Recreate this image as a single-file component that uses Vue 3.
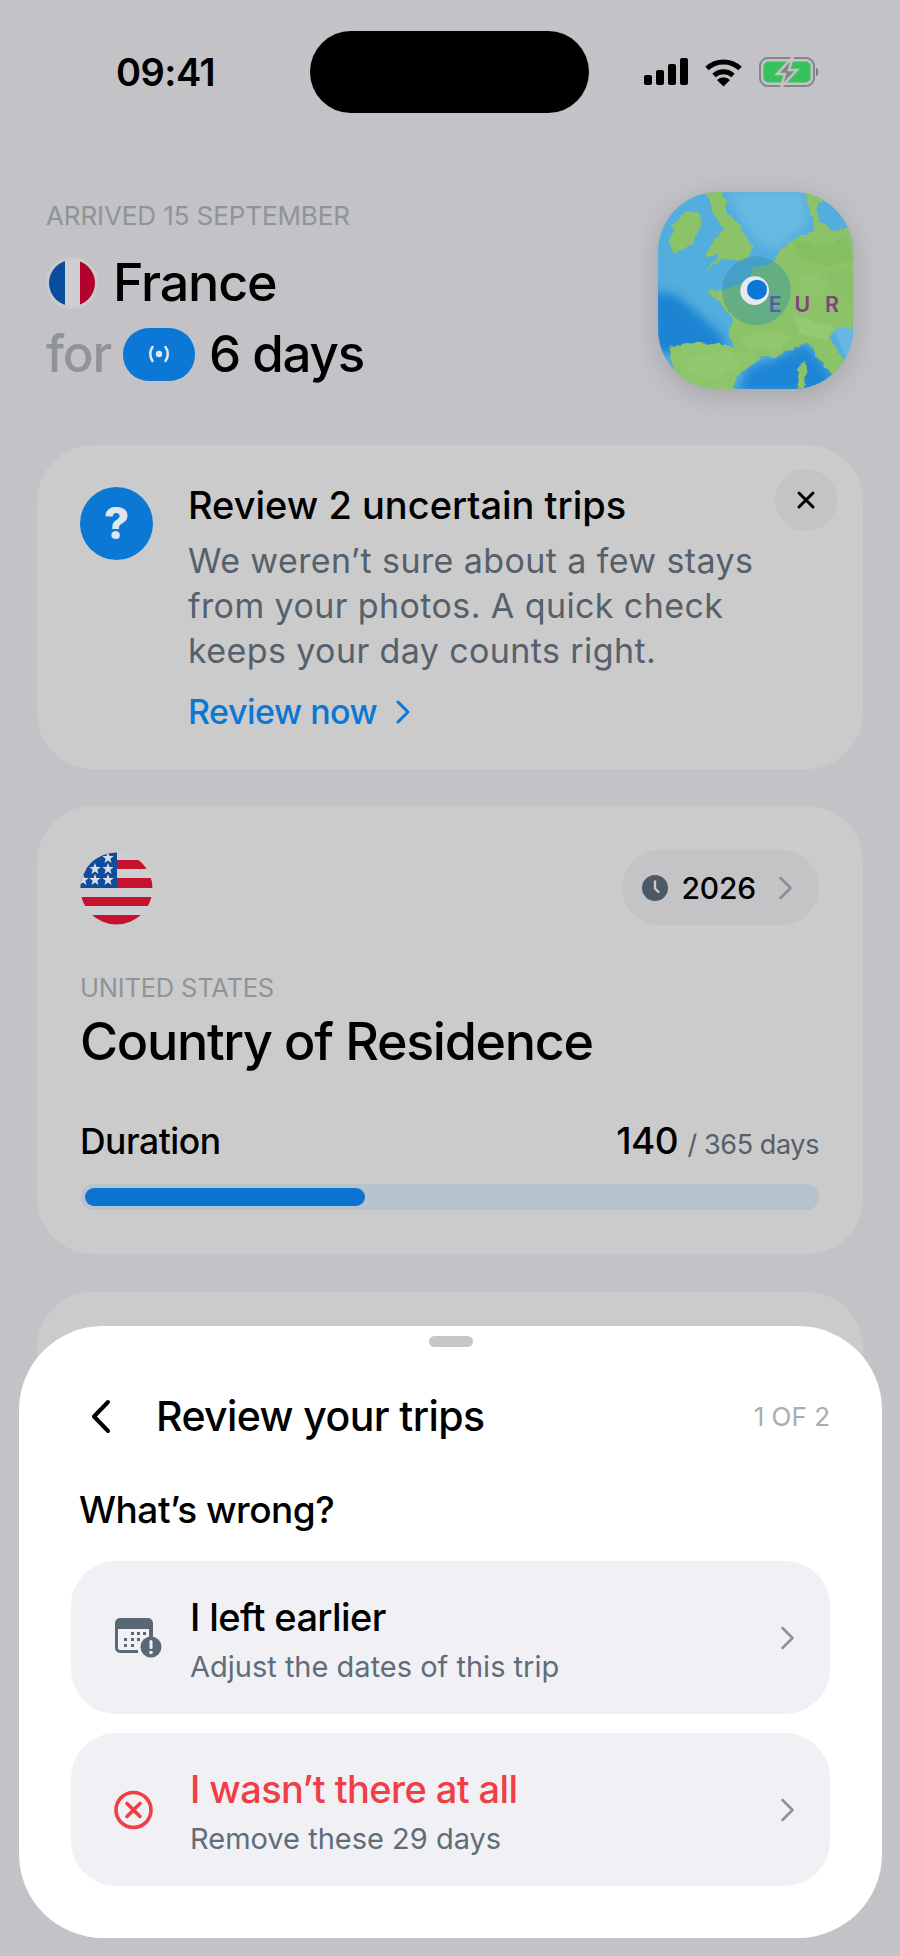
<script setup>
import { computed } from 'vue'

const daysUsed = 140
const daysTotal = 365
const fillWidth = computed(() => (daysUsed / daysTotal) * 100 + '%')

const stars = [
  [108, 858], [95, 869], [108, 869], [83, 880], [95, 880], [108, 880]
]

// a few darker and lighter blotches so the land isn't a flat green
const patches = [
  ['M520 240 L610 262 L680 232 L700 300 L620 322 L540 292 Z', '#84bf62'],
  ['M620 340 L700 330 V420 L640 400 Z', '#87c065'],
  ['M350 530 L470 510 L520 530 L480 572 L390 570 Z', '#92c76f'],
  ['M520 470 L640 500 L620 545 L540 520 Z', '#95c973'],
  ['M210 590 L330 575 L360 620 L280 660 L200 640 Z', '#93c770'],
  ['M530 350 L600 340 L620 400 L550 410 Z', '#90c56d']
]

function starPoints(cx, cy, r) {
  const pts = []
  for (let i = 0; i < 10; i++) {
    const rad = i % 2 ? r * 0.42 : r
    const a = -Math.PI / 2 + (i * Math.PI) / 5
    pts.push((cx + rad * Math.cos(a)).toFixed(1) + ',' + (cy + rad * Math.sin(a)).toFixed(1))
  }
  return pts.join(' ')
}
</script>

<template>
  <div class="screen">
    <div class="status">
      <span class="time">09:41</span>
      <div class="island"></div>
      <div class="status-icons">
        <svg width="44" height="28" viewBox="0 0 44 28" fill="#000">
          <rect x="0" y="17" width="8" height="10" rx="2" />
          <rect x="12" y="12" width="8" height="15" rx="2" />
          <rect x="24" y="6" width="8" height="21" rx="2" />
          <rect x="36" y="0" width="8" height="27" rx="2" />
        </svg>
        <svg width="37" height="29" viewBox="0 0 37 29" fill="none" stroke="#000" stroke-width="5">
          <path d="M2 10.5 A24 24 0 0 1 35 10.5" />
          <path d="M9 17.5 A14 14 0 0 1 28 17.5" />
          <path d="M18.5 28.5 L12 22 A9 9 0 0 1 25 22 Z" fill="#000" stroke="none" />
        </svg>
        <svg width="62" height="30" viewBox="0 0 62 30" fill="none">
          <rect x="1" y="1" width="54" height="28" rx="8" stroke="#838588" stroke-width="2" />
          <rect x="4.5" y="4.5" width="47" height="21" rx="5" fill="#38c25c" />
          <path d="M57 11 C60 12 60 18 57 19 Z" fill="#77797c" />
          <path d="M34 0 L18 17 H26 L22 30 L38 13 H30 Z" fill="#838588" stroke="#c2c2c7" stroke-width="2.5" />
        </svg>
      </div>
    </div>

    <header class="hero">
      <div class="hero-text">
        <div class="arrived">ARRIVED 15 SEPTEMBER</div>
        <div class="place">
          <svg class="fr-flag" width="52" height="52" viewBox="0 0 52 52">
            <clipPath id="frClip"><circle cx="26" cy="26" r="23" /></clipPath>
            <circle cx="26" cy="26" r="26" fill="#cbcbce" />
            <g clip-path="url(#frClip)">
              <rect x="0" y="0" width="19" height="52" fill="#0a4c9e" />
              <rect x="19" y="0" width="15" height="52" fill="#cfcfd1" />
              <rect x="34" y="0" width="18" height="52" fill="#b4002c" />
            </g>
          </svg>
          <span>France</span>
        </div>
        <div class="stay">
          <span class="for">for</span>
          <span class="live-pill">
            <svg width="30" height="24" viewBox="0 0 30 24" fill="none" stroke="#dce8f3" stroke-width="2.6" stroke-linecap="round">
              <path d="M8.5 5 C5.5 9 5.5 15 8.5 19" />
              <path d="M21.5 5 C24.5 9 24.5 15 21.5 19" />
              <circle cx="15" cy="12" r="3.2" fill="#dce8f3" stroke="none" />
            </svg>
          </span>
          <span>6 days</span>
        </div>
      </div>

      <div class="map">
        <svg width="195" height="197" viewBox="115 97 585 591">
          <defs>
            <filter id="soft" x="-20%" y="-20%" width="140%" height="140%">
              <feGaussianBlur stdDeviation="14" />
            </filter>
            <filter id="coast" x="-5%" y="-5%" width="110%" height="110%">
              <feTurbulence type="fractalNoise" baseFrequency="0.035" numOctaves="3" seed="4" />
              <feDisplacementMap in="SourceGraphic" scale="20" xChannelSelector="R" yChannelSelector="G" />
            </filter>
          </defs>
          <rect x="115" y="97" width="585" height="591" fill="#53addd" />
          <path d="M320 97 H560 V200 L470 270 L400 240 Z" fill="#68b9e2" filter="url(#soft)" />
          <path d="M100 395 L170 405 L245 470 L310 530 L320 580 L100 580 Z" fill="#1a84d3" filter="url(#soft)" />
          <path d="M350 700 L385 625 L470 595 L555 552 L610 610 L640 660 L610 700 Z" fill="#1c86d5" filter="url(#soft)" />
          <path d="M640 505 H700 V610 L680 600 Z" fill="#64b8e2" />

          <g filter="url(#coast)">
            <path d="M150 200 L205 155 L245 165 L248 195 L215 250 L190 270 L155 285 L150 240 L165 215 Z" fill="#8cc368" />
            <path d="M255 90 H310 L322 160 L362 205 L402 262 L372 300 L300 302 L255 335 L298 285 L258 287 L292 232 L312 212 L272 150 Z" fill="#8cc368" />
            <path d="M555 90 H625 L590 150 L600 190 L640 210 L720 200 V505 H650 L630 530 L670 600 L675 628 L640 650 L600 600 L565 550 L520 568 L470 592 L420 592 L345 565 L330 530 L340 480 L300 425 L262 395 L310 392 L380 370 L400 330 L465 300 L490 268 L540 228 L585 215 L575 170 Z" fill="#8cc368" />
            <path d="M640 100 H720 V190 L680 170 Z" fill="#8cc368" />
            <path d="M150 565 L210 548 L345 560 L422 594 L380 628 L350 655 L338 700 H240 L165 645 Z" fill="#8fc56b" />
            <path d="M535 625 L556 605 L560 640 L552 690 L532 690 Z" fill="#8cc368" />
            <path v-for="(p, i) in patches" :key="i" :d="p[0]" :fill="p[1]" />
          </g>

          <circle cx="410" cy="393" r="103" fill="#2f8fa8" fill-opacity="0.42" />
          <text x="467" y="458" class="eur">E</text>
          <text x="548" y="458" class="eur eur-r">U</text>
          <text x="637" y="458" class="eur eur-r">R</text>
          <text x="726" y="458" class="eur eur-r">O</text>
          <circle cx="405" cy="393" r="43" fill="#e6e9ee" />
          <circle cx="412" cy="390" r="30" fill="#0b78d8" />
        </svg>
      </div>
    </header>

    <section class="card notice">
      <div class="help-badge">?</div>
      <div class="notice-body">
        <h3>Review 2 uncertain trips</h3>
        <p>We weren’t sure about a few stays from your photos. A quick check keeps your day counts right.</p>
        <div class="review-link">
          Review now
          <svg width="14" height="24" viewBox="0 0 14 24" fill="none" stroke="#0a78d4" stroke-width="3" stroke-linecap="round" stroke-linejoin="round">
            <path d="M2 2 L12 12 L2 22" />
          </svg>
        </div>
      </div>
      <button class="close">
        <svg width="20" height="20" viewBox="0 0 20 20" stroke="#000" stroke-width="3" stroke-linecap="round">
          <path d="M3 3 L17 17 M17 3 L3 17" />
        </svg>
      </button>
    </section>

    <section class="card residence">
      <div class="res-top">
        <svg width="73" height="73" viewBox="80 852 73 73">
          <clipPath id="usClip"><circle cx="116.5" cy="888.5" r="36" /></clipPath>
          <g clip-path="url(#usClip)">
            <rect x="80" y="852" width="73" height="73" fill="#cfcfd1" />
            <rect x="80" y="860" width="73" height="9" fill="#c4122f" />
            <rect x="80" y="878" width="73" height="10" fill="#c4122f" />
            <rect x="80" y="897" width="73" height="9" fill="#c4122f" />
            <rect x="80" y="915" width="73" height="10" fill="#c4122f" />
            <rect x="80" y="852" width="37" height="36" fill="#0e4d9c" />
            <polygon v-for="(s, i) in stars" :key="i" :points="starPoints(s[0], s[1], 6)" fill="#dcdde0" />
          </g>
        </svg>
        <div class="year-pill">
          <svg width="26" height="26" viewBox="0 0 26 26">
            <circle cx="13" cy="13" r="13" fill="#4c5966" />
            <path d="M13 6.5 V13.5 L16.5 17" fill="none" stroke="#cbcbcc" stroke-width="2.4" stroke-linecap="round" />
          </svg>
          <span>2026</span>
          <svg width="15" height="24" viewBox="0 0 15 24" fill="none" stroke="#8b9096" stroke-width="2.6" stroke-linecap="round" stroke-linejoin="round">
            <path d="M2.5 2 L12.5 12 L2.5 22" />
          </svg>
        </div>
      </div>
      <div class="res-country">UNITED STATES</div>
      <h2>Country of Residence</h2>
      <div class="duration">
        <span>Duration</span>
        <span class="count">{{ daysUsed }} <small>/ {{ daysTotal }} days</small></span>
      </div>
      <div class="track">
        <div class="fill" :style="{ width: fillWidth }"></div>
      </div>
    </section>

    <section class="card third"></section>

    <div class="sheet">
      <div class="handle"></div>
      <div class="sheet-head">
        <svg width="22" height="35" viewBox="0 0 22 35" fill="none" stroke="#000" stroke-width="4" stroke-linecap="round" stroke-linejoin="round">
          <path d="M18 3 L4 17.5 L18 32" />
        </svg>
        <span class="sheet-title">Review your trips</span>
        <span class="step">1 OF 2</span>
      </div>
      <div class="wrong">What’s wrong?</div>

      <div class="row">
        <svg class="row-icon cal" width="50" height="46" viewBox="0 0 50 46">
          <path d="M6 1 H34 A5 5 0 0 1 39 6 V24 H35 V12 H4 V31 A2 2 0 0 0 6 33 H24 V36 H6 A5 5 0 0 1 1 31 V6 A5 5 0 0 1 6 1 Z" fill="#5a6876" />
          <g fill="#5a6876">
            <rect x="17" y="15" width="3" height="3" /><rect x="23" y="15" width="3" height="3" /><rect x="29" y="15" width="3" height="3" />
            <rect x="10" y="21" width="3" height="3" /><rect x="17" y="21" width="3" height="3" /><rect x="23" y="21" width="3" height="3" />
            <rect x="10" y="27" width="3" height="3" /><rect x="17" y="27" width="3" height="3" />
          </g>
          <circle cx="37" cy="30" r="10.5" fill="#5a6876" />
          <rect x="35.5" y="23" width="3" height="9" rx="1.5" fill="#f1f1f5" />
          <circle cx="37" cy="35.5" r="1.8" fill="#f1f1f5" />
        </svg>
        <div class="row-text">
          <div class="row-title">I left earlier</div>
          <div class="row-sub">Adjust the dates of this trip</div>
        </div>
        <svg width="15" height="24" viewBox="0 0 15 24" fill="none" stroke="#8b939b" stroke-width="2.6" stroke-linecap="round" stroke-linejoin="round">
          <path d="M2.5 2 L12.5 12 L2.5 22" />
        </svg>
      </div>

      <div class="row">
        <svg class="row-icon" width="50" height="40" viewBox="0 0 50 40" fill="none" stroke="#f03e46" stroke-width="3.6" stroke-linecap="round">
          <circle cx="19.5" cy="20" r="17.5" />
          <path d="M13 13.5 L26 26.5 M26 13.5 L13 26.5" />
        </svg>
        <div class="row-text">
          <div class="row-title danger">I wasn’t there at all</div>
          <div class="row-sub">Remove these 29 days</div>
        </div>
        <svg width="15" height="24" viewBox="0 0 15 24" fill="none" stroke="#8b939b" stroke-width="2.6" stroke-linecap="round" stroke-linejoin="round">
          <path d="M2.5 2 L12.5 12 L2.5 22" />
        </svg>
      </div>
    </div>
  </div>
</template>

<style>
html, body {
  margin: 0;
  background: #c2c2c7;
}
</style>

<style scoped>
.screen {
  position: relative;
  width: 900px;
  height: 1956px;
  overflow: hidden;
  background: #c2c2c7;
  font-family: Inter, "Noto Sans", sans-serif;
  color: #000;
}

/* status bar */
.status {
  display: flex;
  align-items: center;
  height: 82px;
  padding: 31px 79px 0 116px;
}
.time {
  width: 194px;
  font-size: 38px;
  font-weight: 600;
  letter-spacing: -0.5px;
}
.island {
  width: 280px;
  height: 82px;
  border-radius: 41px;
  background: #000;
}
.status-icons {
  display: flex;
  align-items: center;
  gap: 17px;
  margin-left: 55px;
}

/* header */
.hero {
  display: flex;
  justify-content: space-between;
  padding: 79px 47px 0 46px;
}
.hero-text {
  padding-top: 9px;
}
.arrived {
  font-size: 26px;
  line-height: 30px;
  color: #8f9498;
  letter-spacing: -0.1px;
}
.place {
  display: flex;
  align-items: center;
  gap: 15px;
  margin-top: 23px;
  font-size: 52px;
  line-height: 58px;
  font-weight: 500;
  letter-spacing: -1.2px;
}
.stay {
  display: flex;
  align-items: center;
  gap: 14px;
  margin-top: 13px;
  font-size: 51px;
  line-height: 58px;
  font-weight: 500;
  letter-spacing: -1.2px;
}
.for {
  margin-right: -2px;
  color: #8f9498;
}
.live-pill {
  display: flex;
  align-items: center;
  justify-content: center;
  width: 72px;
  height: 53px;
  border-radius: 26px;
  background: #0b78d6;
}
.map {
  width: 195px;
  height: 197px;
  border-radius: 60px;
  overflow: hidden;
  box-shadow: 0 6px 28px rgba(0, 0, 0, 0.16);
}
.map svg {
  display: block;
}
.eur {
  font-size: 64px;
  font-weight: 600;
  fill: #52609f;
  text-anchor: middle;
}
.eur-r {
  fill: #84407f;
}

/* cards */
.card {
  margin: 0 37px;
  background: #cbcbcc;
  border-radius: 56px;
  box-sizing: border-box;
}
.notice {
  position: relative;
  display: flex;
  height: 324px;
  margin-top: 56px;
  padding: 42px 43px;
}
.help-badge {
  flex: none;
  width: 73px;
  height: 73px;
  border-radius: 50%;
  background: #0b78d6;
  color: #dfe6ec;
  font-size: 44px;
  font-weight: 800;
  line-height: 73px;
  text-align: center;
}
.notice-body {
  margin-left: 35px;
}
.notice-body h3 {
  margin: -4px 0 0;
  font-size: 38px;
  line-height: 44px;
  font-weight: 500;
  letter-spacing: 0;
}
.notice-body p {
  width: 600px;
  margin: 11px 0 0;
  font-size: 34px;
  line-height: 45px;
  color: #56606b;
  letter-spacing: 0.4px;
}
.review-link {
  display: flex;
  align-items: center;
  gap: 19px;
  margin-top: 17px;
  font-size: 34px;
  line-height: 44px;
  font-weight: 500;
  color: #0a78d4;
  letter-spacing: -0.5px;
}
.close {
  position: absolute;
  top: 24px;
  right: 26px;
  display: flex;
  align-items: center;
  justify-content: center;
  width: 62px;
  height: 62px;
  padding: 0;
  border: 0;
  border-radius: 50%;
  background: #c4c4c6;
}

.residence {
  height: 448px;
  margin-top: 37px;
  padding: 44px 44px 0 43px;
}
.res-top {
  display: flex;
  justify-content: space-between;
  align-items: flex-start;
  margin-top: 2px;
}
.year-pill {
  display: flex;
  align-items: center;
  height: 75px;
  margin-top: -2px;
  padding: 0 26px 0 20px;
  border-radius: 38px;
  background: #c4c4c6;
  font-size: 30px;
  font-weight: 500;
  letter-spacing: -0.2px;
}
.year-pill span {
  margin: 0 22px 0 14px;
}
.res-country {
  margin-top: 48px;
  font-size: 25.5px;
  line-height: 30px;
  color: #8f9498;
  letter-spacing: -0.2px;
}
.residence h2 {
  margin: 8px 0 0;
  font-size: 52px;
  line-height: 62px;
  font-weight: 500;
  letter-spacing: -1.3px;
}
.duration {
  display: flex;
  justify-content: space-between;
  align-items: baseline;
  margin-top: 46px;
  font-size: 35.5px;
  line-height: 44px;
  font-weight: 500;
  letter-spacing: -0.5px;
}
.count {
  font-size: 37px;
}
.count small {
  font-size: 27px;
  font-weight: 400;
  color: #56606b;
  letter-spacing: -0.4px;
}
.track {
  height: 26px;
  margin: 17px 0 0 1px;
  padding: 4px;
  box-sizing: border-box;
  border-radius: 13px;
  background: #b6c2cc;
}
.fill {
  height: 18px;
  border-radius: 9px;
  background: #0a74d0;
}

.third {
  height: 300px;
  margin-top: 38px;
}

/* bottom sheet */
.sheet {
  position: absolute;
  left: 19px;
  top: 1326px;
  box-sizing: border-box;
  width: 863px;
  height: 612px;
  padding: 10px 52px 0;
  border-radius: 84px;
  background: #fff;
}
.handle {
  width: 44px;
  height: 11px;
  margin: 0 auto;
  border-radius: 6px;
  background: #c6c6c8;
}
.sheet-head {
  display: flex;
  align-items: center;
  margin-top: 46px;
  height: 46px;
  padding-left: 19px;
}
.sheet-title {
  margin-left: 44px;
  font-size: 41px;
  font-weight: 500;
  letter-spacing: -0.6px;
}
.step {
  margin-left: auto;
  font-size: 26px;
  color: #a9acb0;
}
.wrong {
  margin: 47px 0 0 8px;
  font-size: 37px;
  line-height: 48px;
  font-weight: 500;
  letter-spacing: -0.5px;
}
.row {
  display: flex;
  align-items: center;
  box-sizing: border-box;
  height: 153px;
  margin-bottom: 19px;
  padding: 0 35px 0 43px;
  border-radius: 45px;
  background: #f1f1f5;
}
.wrong + .row {
  margin-top: 27px;
}
.row-icon {
  flex: none;
  margin-right: 26px;
}
.cal {
  margin-top: 5px;
}
.row-text {
  flex: 1;
  padding-top: 5px;
}
.row-title {
  font-size: 38px;
  line-height: 44px;
  font-weight: 500;
  letter-spacing: -0.6px;
}
.danger {
  color: #f03e46;
}
.row-sub {
  margin-top: 10px;
  font-size: 29px;
  line-height: 36px;
  color: #5f6d7a;
  letter-spacing: 0;
}
</style>
